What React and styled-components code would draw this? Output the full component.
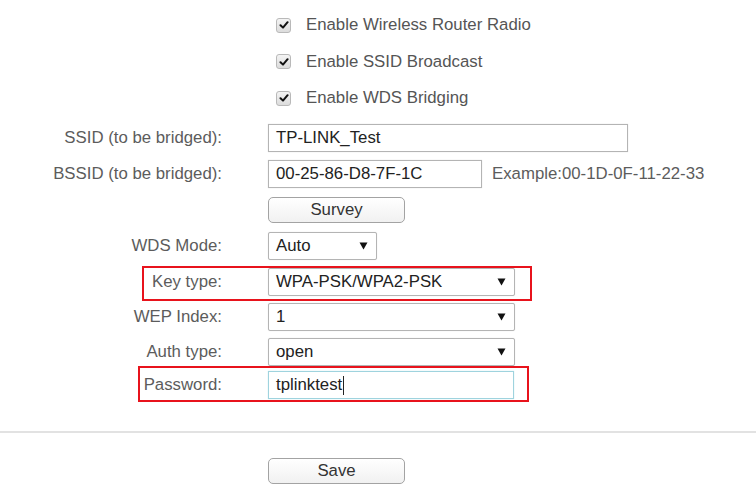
import React from "react";
import styled, { createGlobalStyle } from "styled-components";

const GlobalStyle = createGlobalStyle`
  html, body {
    margin: 0;
    padding: 0;
    background: #ffffff;
  }
  body {
    font-family: "Liberation Sans", Arial, sans-serif;
    font-size: 16.8px;
    color: #555;
  }
`;

const checks = [
  "Enable Wireless Router Radio",
  "Enable SSID Broadcast",
  "Enable WDS Bridging",
];

const CheckIcon = () => (
  <svg width="10" height="10" viewBox="0 0 10 10">
    <path
      d="M1.5 5.2 L4 7.6 L8.6 2.2"
      fill="none"
      stroke="#111"
      strokeWidth="2"
      strokeLinecap="round"
      strokeLinejoin="round"
    />
  </svg>
);

const Caret = () => (
  <svg width="9" height="8" viewBox="0 0 9 8">
    <path d="M0.5 0.5 H8.5 L4.5 7.5 Z" fill="#111" />
  </svg>
);

const Select = ({ value, width }) => (
  <SelectBox $width={width}>
    <span>{value}</span>
    <Caret />
  </SelectBox>
);

const App = () => {
  return (
    <Page>
      <GlobalStyle />
      <Checks>
        {checks.map((c) => (
          <CheckRow key={c}>
            <Box>
              <CheckIcon />
            </Box>
            <span>{c}</span>
          </CheckRow>
        ))}
      </Checks>

      <Form>
        <Row $h={36}>
          <Label>SSID (to be bridged):</Label>
          <Field>
            <TextBox $width={360}>TP-LINK_Test</TextBox>
          </Field>
        </Row>
        <Row $h={36}>
          <Label>BSSID (to be bridged):</Label>
          <Field>
            <TextBox $width={214}>00-25-86-D8-7F-1C</TextBox>
            <Hint>Example:00-1D-0F-11-22-33</Hint>
          </Field>
        </Row>
        <Row $h={36}>
          <Label />
          <Field>
            <Button>Survey</Button>
          </Field>
        </Row>
        <Row $h={37}>
          <Label>WDS Mode:</Label>
          <Field>
            <Select value="Auto" width={109} />
          </Field>
        </Row>
        <Row $h={35} $highlight={{ left: 142, right: 532, top: 1.5, bottom: -1.5 }}>
          <Label>Key type:</Label>
          <Field>
            <Select value="WPA-PSK/WPA2-PSK" width={247} />
          </Field>
        </Row>
        <Row $h={35}>
          <Label>WEP Index:</Label>
          <Field>
            <Select value="1" width={247} />
          </Field>
        </Row>
        <Row $h={34}>
          <Label>Auth type:</Label>
          <Field>
            <Select value="open" width={247} />
          </Field>
        </Row>
        <Row $h={33} $highlight={{ left: 138, right: 529, top: -2.5, bottom: 0 }}>
          <Label>Password:</Label>
          <Field>
            <TextBox $width={246} $focus>
              tplinktest<CaretLine />
            </TextBox>
          </Field>
        </Row>
      </Form>

      <Divider />

      <Footer>
        <Button>Save</Button>
      </Footer>
    </Page>
  );
};

export default App;

const Page = styled.div`
  width: 756px;
  height: 486px;
  overflow: hidden;
  padding-top: 7px;
  box-sizing: border-box;
`;

const Checks = styled.div`
  display: flex;
  flex-direction: column;
  padding-left: 276px;
`;

const CheckRow = styled.div`
  display: flex;
  align-items: center;
  gap: 15px;
  height: 36.5px;
  color: #555;
`;

const Box = styled.span`
  width: 13px;
  height: 13px;
  border: 1px solid #b9b9b9;
  border-radius: 3px;
  background: linear-gradient(#f4f4f4, #dcdcdc);
  display: flex;
  align-items: center;
  justify-content: center;
`;

const Form = styled.div`
  display: flex;
  flex-direction: column;
  margin-top: 3px;
`;

const Row = styled.div`
  position: relative;
  display: grid;
  grid-template-columns: 222px 1fr;
  column-gap: 46px;
  align-items: center;
  height: ${({ $h }) => $h}px;

  &::before {
    content: "";
    display: ${({ $highlight }) => ($highlight ? "block" : "none")};
    position: absolute;
    left: ${({ $highlight }) => ($highlight ? $highlight.left : 0)}px;
    width: ${({ $highlight }) =>
      $highlight ? $highlight.right - $highlight.left : 0}px;
    top: ${({ $highlight }) => ($highlight ? $highlight.top : 0)}px;
    bottom: ${({ $highlight }) => ($highlight ? $highlight.bottom : 0)}px;
    border: 2px solid #e8131c;
    box-sizing: border-box;
    pointer-events: none;
  }
`;

const Label = styled.div`
  text-align: right;
  color: #5c5c5c;
  white-space: nowrap;
`;

const Field = styled.div`
  display: flex;
  align-items: center;
  gap: 10px;
`;

const TextBox = styled.div`
  width: ${({ $width }) => $width}px;
  height: 28px;
  box-sizing: border-box;
  border: 1px solid ${({ $focus }) => ($focus ? "#9fd3de" : "#b4b4b4")};
  box-shadow: 0 0 1px ${({ $focus }) => ($focus ? "#bfe4ec" : "#d8d8d8")};
  padding: 0 7px;
  display: flex;
  align-items: center;
  color: #222;
  background: #fff;
  white-space: nowrap;
`;

const CaretLine = styled.span`
  display: inline-block;
  width: 1px;
  height: 19px;
  background: #222;
  margin-left: 1px;
`;

const SelectBox = styled.div`
  width: ${({ $width }) => $width}px;
  height: 28px;
  box-sizing: border-box;
  border: 1px solid #b4b4b4;
  box-shadow: 0 0 1px #d8d8d8;
  border-radius: 2px;
  padding: 0 8px 0 7px;
  display: flex;
  align-items: center;
  justify-content: space-between;
  color: #222;
  background: #fff;
`;

const Hint = styled.span`
  color: #5c5c5c;
  white-space: nowrap;
`;

const Button = styled.button`
  width: 137px;
  height: 26px;
  box-sizing: border-box;
  border: 1px solid #a3a3a3;
  border-radius: 5px;
  background: linear-gradient(#ffffff, #f1f1f1);
  font-family: "Liberation Sans", Arial, sans-serif;
  font-size: 16.8px;
  color: #333;
  padding: 0;
  line-height: 24px;
`;

const Divider = styled.div`
  height: 2px;
  background: #e2e2e2;
  margin-top: 29px;
`;

const Footer = styled.div`
  display: flex;
  padding-left: 268px;
  margin-top: 25px;
`;
